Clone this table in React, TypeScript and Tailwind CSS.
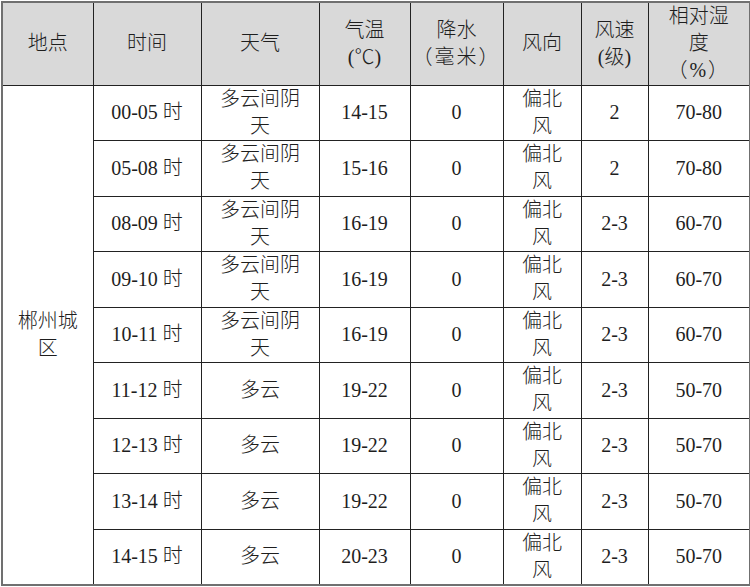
import React from "react";

type Row = {
  time: string;
  weather: string[];
  temp: string;
  rain: string;
  dir: string[];
  speed: string;
  hum: string;
};

const cloudyGap = ["多云间阴", "天"];
const north = ["偏北", "风"];

const rows: Row[] = [
  { time: "00-05 时", weather: cloudyGap, temp: "14-15", rain: "0", dir: north, speed: "2", hum: "70-80" },
  { time: "05-08 时", weather: cloudyGap, temp: "15-16", rain: "0", dir: north, speed: "2", hum: "70-80" },
  { time: "08-09 时", weather: cloudyGap, temp: "16-19", rain: "0", dir: north, speed: "2-3", hum: "60-70" },
  { time: "09-10 时", weather: cloudyGap, temp: "16-19", rain: "0", dir: north, speed: "2-3", hum: "60-70" },
  { time: "10-11 时", weather: cloudyGap, temp: "16-19", rain: "0", dir: north, speed: "2-3", hum: "60-70" },
  { time: "11-12 时", weather: ["多云"], temp: "19-22", rain: "0", dir: north, speed: "2-3", hum: "50-70" },
  { time: "12-13 时", weather: ["多云"], temp: "19-22", rain: "0", dir: north, speed: "2-3", hum: "50-70" },
  { time: "13-14 时", weather: ["多云"], temp: "19-22", rain: "0", dir: north, speed: "2-3", hum: "50-70" },
  { time: "14-15 时", weather: ["多云"], temp: "20-23", rain: "0", dir: north, speed: "2-3", hum: "50-70" },
];

const widths = [91, 108, 118, 91, 93, 78, 67, 102];

const cell = "border border-[#222] text-center align-middle p-0 leading-[27px]";

function Lines({ lines }: { lines: React.ReactNode[] }) {
  return (
    <>
      {lines.map((l, i) => (
        <div key={i}>{l}</div>
      ))}
    </>
  );
}

const headers: React.ReactNode[][] = [
  ["地点"],
  ["时间"],
  ["天气"],
  ["气温", "(℃)"],
  ["降水", <span className="tracking-[2px]">（毫米）</span>],
  ["风向"],
  ["风速", "(级)"],
  ["相对湿", "度", <span className="tracking-[2px]">（%）</span>],
];

export default function App() {
  return (
    <div className="bg-white w-[750px] h-[587px] pl-[1px] pt-[1px]">
      <table
        className="table-fixed border-collapse w-[748px] border-2 border-[#707070] text-[20px] font-light text-[#1e1e1e]"
        style={{ fontFamily: '"Liberation Serif", "Noto Sans CJK SC", serif' }}
      >
        <colgroup>
          {widths.map((w, i) => (
            <col key={i} style={{ width: w }} />
          ))}
        </colgroup>
        <thead>
          <tr className="h-[83px] bg-[#d9d9d9]">
            {headers.map((h, i) => (
              <th key={i} className={`${cell} font-light`}>
                <Lines lines={h} />
              </th>
            ))}
          </tr>
        </thead>
        <tbody>
          {rows.map((r, i) => (
            <tr key={i} className="h-[55.5px]">
              {i === 0 && (
                <td rowSpan={rows.length} className={cell}>
                  <Lines lines={["郴州城", "区"]} />
                </td>
              )}
              <td className={cell}>{r.time}</td>
              <td className={cell}>
                <Lines lines={r.weather} />
              </td>
              <td className={cell}>{r.temp}</td>
              <td className={cell}>{r.rain}</td>
              <td className={cell}>
                <Lines lines={r.dir} />
              </td>
              <td className={cell}>{r.speed}</td>
              <td className={cell}>{r.hum}</td>
            </tr>
          ))}
        </tbody>
      </table>
    </div>
  );
}
